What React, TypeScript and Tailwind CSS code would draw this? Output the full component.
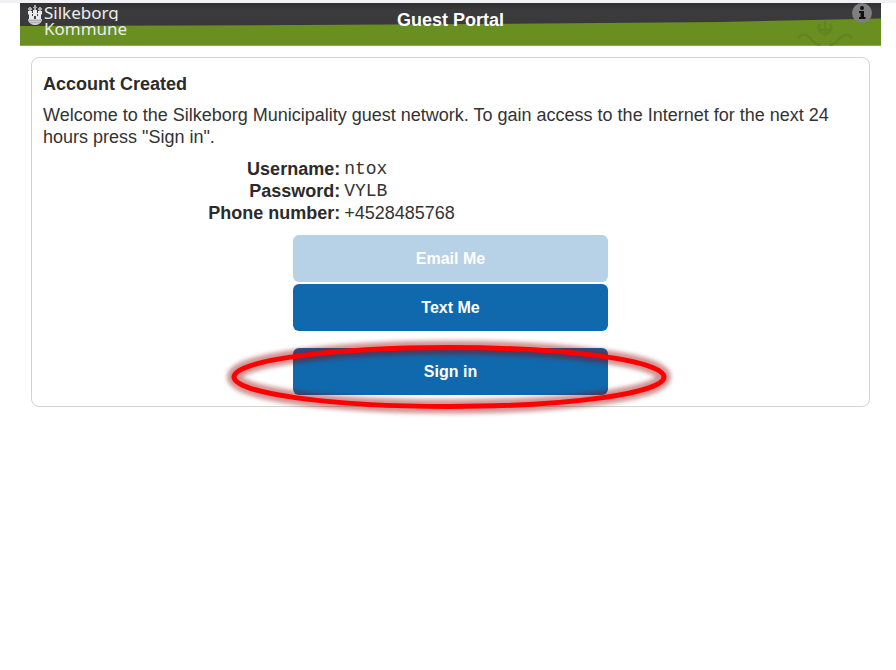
import React from 'react';

interface Credential {
  label: string;
  value: string;
  mono?: boolean;
}

const credentials: Credential[] = [
  { label: 'Username:', value: 'ntox', mono: true },
  { label: 'Password:', value: 'VYLB', mono: true },
  { label: 'Phone number:', value: '+4528485768' },
];

const HeaderArt = () => (
  <svg className="absolute inset-0 h-full w-full" viewBox="0 0 861 43" preserveAspectRatio="none" aria-hidden="true">
    <defs>
      <linearGradient id="slate" x1="0" y1="0" x2="0" y2="1">
        <stop offset="0" stopColor="#303030" />
        <stop offset="0.3" stopColor="#3c3b3d" />
        <stop offset="1" stopColor="#383738" />
      </linearGradient>
    </defs>
    <rect width="861" height="27" fill="url(#slate)" />
    <path d="M0 23 L280 22 L520 20.500 L700 19 L861 15.500 V43 H0 Z" fill="#688f20" />
    <path d="M0 42.500 H861" stroke="#8da461" strokeWidth="1" />
    <g fill="none" stroke="#5b7f1e" strokeWidth="2.500" opacity="0.5">
      <path d="M779 36 C778 31 786 31 789 34 C793 38 795 42 801 42" />
      <path d="M831 36 C832 31 824 31 821 34 C817 38 815 42 809 42" />
      <path d="M800 21 C797 26 799 30 805 31 C811 30 813 26 810 21 M805 18 V33 M799 27 H811" />
    </g>
  </svg>
);

const Crest = () => (
  <svg className="h-5 w-4 shrink-0" viewBox="0 0 16 20" fill="#e9e9eb" aria-hidden="true">
    <path d="M7 0 h2 v2 h1 v1 h-1 v2 h-2 V3 H6 V2 h1 Z M2 2 h2 v1 h1 v2 H4 v1 H2 V5 H1 V3 h1 Z M12 2 h2 v1 h1 v2 h-1 v1 h-2 V5 h-1 V3 h1 Z" opacity="0.65" />
    <path d="M1 6 h4 v2 h1 V5 h4 v3 h1 V6 h4 v3 l-1 1 v4 H2 v-4 L1 9 Z" />
    <path d="M5 9 h1 v2 H5 Z M10 9 h1 v2 h-1 Z M7 11 h2 v3 H7 Z" fill="#444" />
    <path d="M1 14 h14 c0 4 -4 6 -7 6 s-7 -2 -7 -6 Z" opacity="0.85" />
    <path d="M2 15.500 h12 M3 17.500 h10" stroke="#aaa" strokeWidth="0.8" />
  </svg>
);

const SignInMarker = () => (
  <svg
    className="pointer-events-none absolute top-1/2 left-1/2 h-[100px] w-[480px] -translate-x-1/2 -translate-y-1/2"
    viewBox="2 -5 480 100"
    aria-hidden="true"
  >
    <defs>
      <filter id="glow" x="-10%" y="-40%" width="120%" height="180%">
        <feGaussianBlur stdDeviation="2" />
      </filter>
    </defs>
    <ellipse cx="240" cy="50" rx="215" ry="29.500" fill="none" stroke="#900000" strokeWidth="14" opacity="0.42" filter="url(#glow)" />
    <ellipse cx="240" cy="50" rx="215" ry="29.500" fill="none" stroke="#ff0000" strokeWidth="5" />
  </svg>
);

const buttonBase = 'block h-[47px] w-full rounded-md text-base font-bold text-white';

const App: React.FC = () => {
  return (
    <div className="min-h-screen bg-white pr-[15px] pl-5 font-['Liberation_Sans',Arial,sans-serif] text-lg text-[#333]">
      <div className="-mr-[15px] -ml-5 h-[3px] bg-[#f0f0f5]" />
      <header className="relative h-[43px] overflow-hidden">
        <HeaderArt />
        <div className="relative grid h-full grid-cols-[1fr_auto_1fr] items-start">
          <div className="flex gap-px pt-0.5 pl-[7px] font-['Noto_Sans',sans-serif] text-[17px] text-[#ececec]">
            <Crest />
            <div className="leading-4">
              <div className="h-4 overflow-hidden">Silkeborg</div>
              <div>Kommune</div>
            </div>
          </div>
          <h1 className="pt-[5px] text-lg leading-6 font-bold text-white">Guest Portal</h1>
          <button type="button" aria-label="Information" className="mr-[9px] size-5 justify-self-end rounded-full bg-[#7f7f80]">
            <svg viewBox="0 0 20 20" fill="#111" aria-hidden="true">
              <circle cx="10" cy="5" r="2" />
              <path d="M7 8 h5 v6 h1.500 v2 H7 v-2 h1.500 v-4 H7 Z" />
            </svg>
          </button>
        </div>
      </header>

      <main className="mt-[11px] mr-[11px] ml-[11px] rounded-lg border border-[#d2d2d2] px-[11px] pt-[15px] pb-[11px]">
        <h2 className="leading-[22px] font-bold text-[#2b2b2b]">Account Created</h2>
        <p className="mt-[9px] leading-[22px]">
          Welcome to the Silkeborg Municipality guest network. To gain access to the Internet for the next 24 hours press
          "Sign in".
        </p>
        <dl className="mt-[10px] grid grid-cols-[299fr_517fr] gap-x-1 leading-[22px]">
          {credentials.map(item => (
            <React.Fragment key={item.label}>
              <dt className="text-right font-bold text-[#2b2b2b]">{item.label}</dt>
              <dd className={item.mono ? "font-['Liberation_Mono',monospace]" : ''}>{item.value}</dd>
            </React.Fragment>
          ))}
        </dl>
        <div className="mx-auto mt-[11px] w-full max-w-[315px]">
          <button type="button" disabled className={`${buttonBase} bg-[#b7d1e6]`}>Email Me</button>
          <button type="button" className={`${buttonBase} mt-[2px] bg-[#0f69ac]`}>Text Me</button>
          <div className="relative mt-[17px]">
            <button type="button" className={`${buttonBase} bg-[#0f69ac]`}>Sign in</button>
            <SignInMarker />
          </div>
        </div>
      </main>
    </div>
  );
};

export default App;
